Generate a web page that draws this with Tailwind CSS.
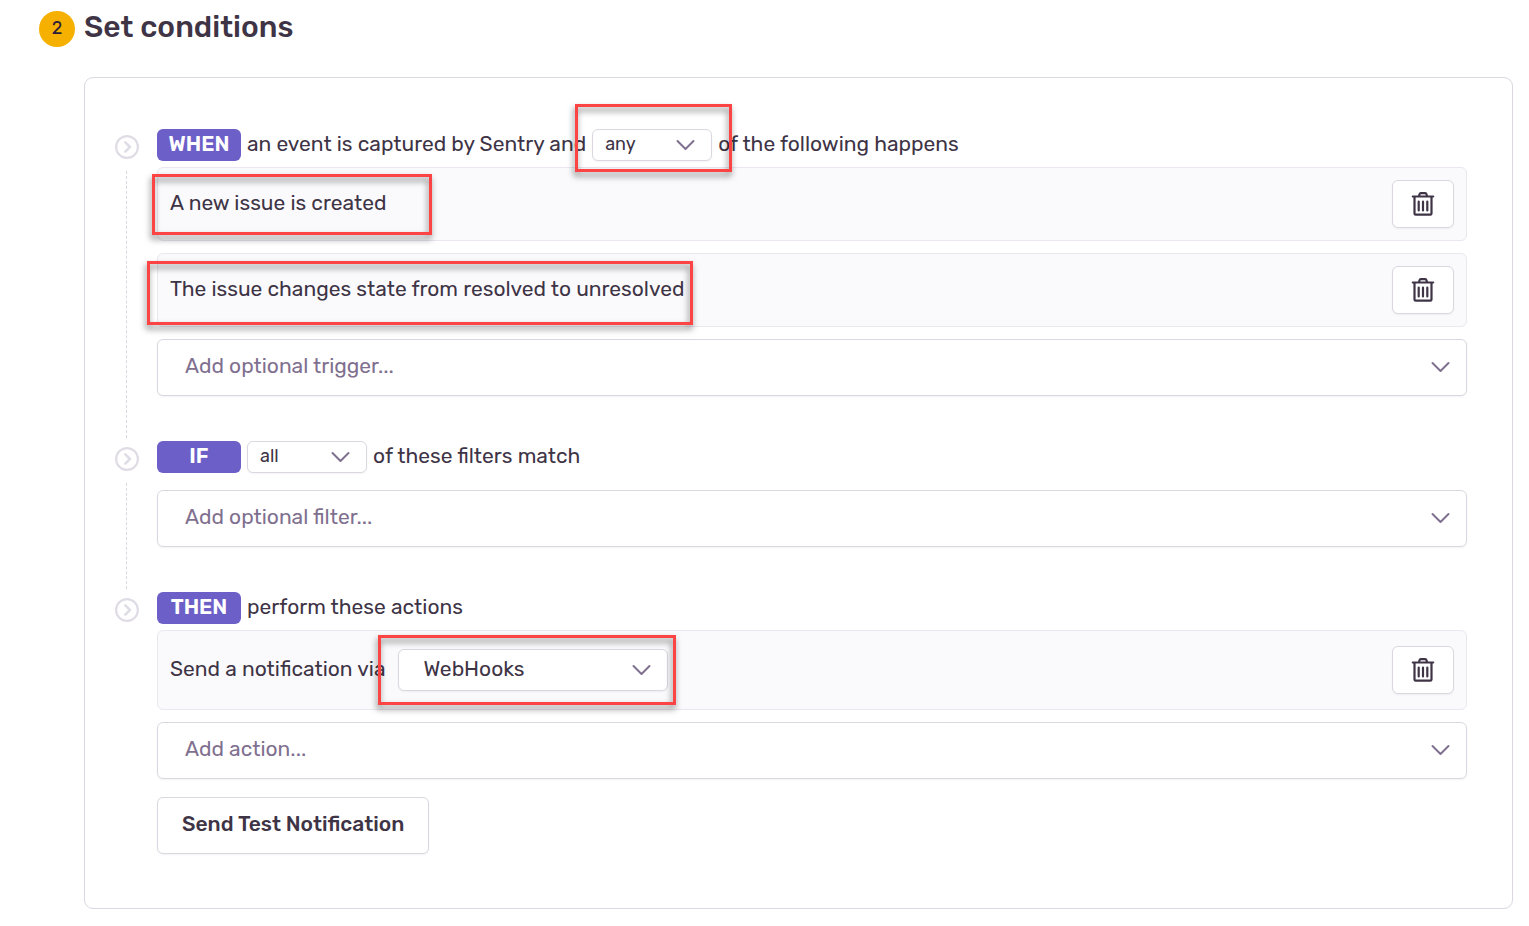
<!DOCTYPE html>
<html lang="en">
<head>
<meta charset="utf-8">
<meta name="viewport" content="width=device-width, initial-scale=1">
<title>Set conditions</title>
<script src="https://cdn.jsdelivr.net/npm/@tailwindcss/browser@4"></script>
</head>
<body class="bg-white font-['Rubik','Roboto',sans-serif] text-[21px] leading-7 text-[#3e3446]">
<svg class="hidden" aria-hidden="true">
  <symbol id="chevron" viewBox="0 0 20 12"><path d="M2.500 2l8 8 8-8" fill="none" stroke="currentColor" stroke-width="2" stroke-linecap="round" stroke-linejoin="round"/></symbol>
  <symbol id="step" viewBox="0 0 24 24"><g fill="none" stroke="currentColor" stroke-width="2.200"><circle cx="12" cy="12" r="10.900"/><path d="M10.300 7.300l4.700 4.700-4.700 4.700" stroke-width="2.500" stroke-linecap="round" stroke-linejoin="round"/></g></symbol>
  <symbol id="trash" viewBox="0 0 24 26"><g fill="none" stroke="currentColor" stroke-width="2.200" stroke-linecap="round" stroke-linejoin="round"><path d="M1.800 5.500h20.400M3.500 5.500v17q0 1.200 1.200 1.200h14.600q1.200 0 1.200-1.200v-17M8 5.200l.5-2q.3-1 1.300-1h4.400q1 0 1.300 1l.5 2"/><path d="M7.700 10.500v9M12 10.500v9M16.300 10.500v9"/></g></symbol>
</svg>
<main class="pb-4 pr-4 pl-[39px] pt-[11px]">
  <header class="flex gap-[9px]">
    <span class="flex size-9 shrink-0 items-center justify-center rounded-full bg-[#f5b000] pb-0.5 text-lg text-[#2b1d38]">2</span>
    <h1 class="text-[30px] leading-8 font-medium">Set conditions</h1>
  </header>

  <form class="mt-[30px] ml-[45px] rounded-[9px] border border-[#dbd6e1] pt-[51px] pr-[45px] pb-[54px] pl-[30px]">
    <section class="flex gap-[18px]">
      <div class="flex flex-col pt-1.5 pb-[3px] text-[#e0dce5]">
        <svg class="size-6 shrink-0"><use href="#step"/></svg>
        <span class="mt-3 ml-[11px] flex-1 border-l border-dashed border-[#dbd6e1]"></span>
      </div>
      <div class="min-w-0 flex-1 pb-[45px]">
        <div class="relative z-10 flex h-8 items-center gap-1.5">
          <span class="flex h-8 w-21 items-center justify-center rounded-md bg-[#6c5fc7] pb-0.5 font-semibold text-white">WHEN</span>
          <label for="match-when" class="pb-0.5">an event is captured by Sentry and</label>
          <div class="relative h-8 w-30">
            <select id="match-when" class="h-8 w-full appearance-none rounded-md border border-[#dbd6e1] bg-white pb-0.5 pl-3 text-lg shadow-xs"><option>any</option><option>all</option></select>
            <svg class="pointer-events-none absolute top-2.5 right-[17px] h-3 w-5 text-[#80708f]"><use href="#chevron"/></svg>
            <span class="pointer-events-none absolute -top-[25px] -right-5 -bottom-[11px] -left-[17px] border-3 border-[#fc4444] drop-shadow-[-1px_4px_3px_rgba(0,0,0,0.5)]"></span>
          </div>
          <span class="pb-0.5">of the following happens</span>
        </div>
        <div class="mt-1.5 flex flex-col gap-3">
          <div class="relative flex items-center justify-between rounded-md border border-[#ebe6ef] bg-[#fafafc] p-3">
            <span class="pb-0.5">A new issue is created</span>
            <button type="button" aria-label="Delete" class="flex h-12 w-[62px] items-center justify-center rounded-md border border-[#dbd6e1] bg-white shadow-xs"><svg class="h-[26px] w-6"><use href="#trash"/></svg></button>
            <span class="pointer-events-none absolute top-1.5 -left-1.5 h-[61px] w-[280px] border-3 border-[#fc4444] drop-shadow-[-1px_4px_3px_rgba(0,0,0,0.5)]"></span>
          </div>
          <div class="relative flex items-center justify-between rounded-md border border-[#ebe6ef] bg-[#fafafc] p-3">
            <span class="pb-0.5">The issue changes state from resolved to unresolved</span>
            <button type="button" aria-label="Delete" class="flex h-12 w-[62px] items-center justify-center rounded-md border border-[#dbd6e1] bg-white shadow-xs"><svg class="h-[26px] w-6"><use href="#trash"/></svg></button>
            <span class="pointer-events-none absolute top-[7px] -left-[11px] h-16 w-[546px] border-3 border-[#fc4444] drop-shadow-[-1px_4px_3px_rgba(0,0,0,0.5)]"></span>
          </div>
          <div class="relative">
            <select aria-label="Add optional trigger" class="block h-[57px] w-full appearance-none rounded-md border border-[#dbd6e1] bg-white pb-1 pl-[27px] text-[#80708f] shadow-xs"><option>Add optional trigger...</option></select>
            <svg class="pointer-events-none absolute top-[22px] right-[17px] h-3 w-5 text-[#80708f]"><use href="#chevron"/></svg>
          </div>
        </div>
      </div>
    </section>

    <section class="flex gap-[18px]">
      <div class="flex flex-col pt-1.5 pb-[3px] text-[#e0dce5]">
        <svg class="size-6 shrink-0"><use href="#step"/></svg>
        <span class="mt-3 ml-[11px] flex-1 border-l border-dashed border-[#dbd6e1]"></span>
      </div>
      <div class="min-w-0 flex-1 pb-[45px]">
        <div class="flex h-8 items-center gap-1.5">
          <span class="flex h-8 w-21 items-center justify-center rounded-md bg-[#6c5fc7] pb-0.5 font-semibold text-white">IF</span>
          <div class="relative h-8 w-30">
            <select id="match-if" class="h-8 w-full appearance-none rounded-md border border-[#dbd6e1] bg-white pb-0.5 pl-3 text-lg shadow-xs"><option>all</option><option>any</option></select>
            <svg class="pointer-events-none absolute top-2.5 right-[17px] h-3 w-5 text-[#80708f]"><use href="#chevron"/></svg>
          </div>
          <label for="match-if" class="pb-0.5">of these filters match</label>
        </div>
        <div class="relative mt-[17px]">
          <select aria-label="Add optional filter" class="block h-[57px] w-full appearance-none rounded-md border border-[#dbd6e1] bg-white pb-1 pl-[27px] text-[#80708f] shadow-xs"><option>Add optional filter...</option></select>
          <svg class="pointer-events-none absolute top-[22px] right-[17px] h-3 w-5 text-[#80708f]"><use href="#chevron"/></svg>
        </div>
      </div>
    </section>

    <section class="flex gap-[18px]">
      <div class="flex flex-col pt-1.5 text-[#e0dce5]">
        <svg class="size-6 shrink-0"><use href="#step"/></svg>
      </div>
      <div class="min-w-0 flex-1">
        <div class="flex h-8 items-center gap-1.5">
          <span class="flex h-8 w-21 items-center justify-center rounded-md bg-[#6c5fc7] pb-0.5 font-semibold text-white">THEN</span>
          <span class="pb-0.5">perform these actions</span>
        </div>
        <div class="mt-1.5 flex flex-col gap-3">
          <div class="relative z-10 flex items-center justify-between rounded-md border border-[#ebe6ef] bg-[#fafafc] px-3 py-[15px]">
            <div class="flex items-center gap-[13px]">
              <label for="service" class="pb-0.5">Send a notification via</label>
              <div class="relative w-[270px]">
                <select id="service" class="block h-[42px] w-full appearance-none rounded-md border border-[#dbd6e1] bg-white pb-0.5 pl-6 shadow-xs"><option>WebHooks</option></select>
                <svg class="pointer-events-none absolute top-[15px] right-[17px] h-3 w-5 text-[#80708f]"><use href="#chevron"/></svg>
                <span class="pointer-events-none absolute -inset-y-3.5 -right-2 -left-5 border-3 border-[#fc4444] drop-shadow-[-1px_4px_3px_rgba(0,0,0,0.5)]"></span>
              </div>
            </div>
            <button type="button" aria-label="Delete" class="flex h-12 w-[62px] items-center justify-center rounded-md border border-[#dbd6e1] bg-white shadow-xs"><svg class="h-[26px] w-6"><use href="#trash"/></svg></button>
          </div>
          <div class="relative">
            <select aria-label="Add action" class="block h-[57px] w-full appearance-none rounded-md border border-[#dbd6e1] bg-white pb-1 pl-[27px] text-[#80708f] shadow-xs"><option>Add action...</option></select>
            <svg class="pointer-events-none absolute top-[22px] right-[17px] h-3 w-5 text-[#80708f]"><use href="#chevron"/></svg>
          </div>
        </div>
        <button type="button" class="mt-[18px] h-[57px] rounded-md border border-[#dbd6e1] bg-white px-6 pb-1 font-medium shadow-xs">Send Test Notification</button>
      </div>
    </section>
  </form>
</main>
</body>
</html>
